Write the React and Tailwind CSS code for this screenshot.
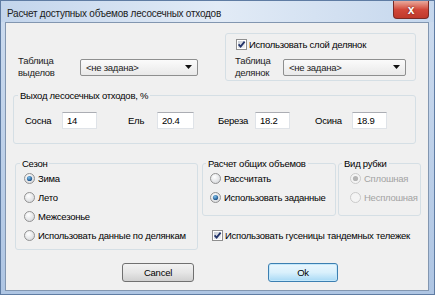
import React from 'react';

function CheckBox({ checked }) {
  return (
    <svg width="11" height="11" viewBox="0 0 11 11" className="shrink-0">
      <defs>
        <linearGradient id="cbfill" x1="0" y1="0" x2="1" y2="1">
          <stop offset="0" stopColor="#c9ced6" />
          <stop offset="1" stopColor="#f4f5f6" />
        </linearGradient>
      </defs>
      <rect x="0.5" y="0.5" width="10" height="10" fill="#fff" stroke="#8f8f8f" />
      <rect x="2" y="2" width="7" height="7" fill="url(#cbfill)" />
      {checked && <path d="M2.6 5.4 L4.6 7.6 L8.6 2.6" fill="none" stroke="#23346a" strokeWidth="1.8" />}
    </svg>
  );
}

function Radio({ checked, disabled }) {
  return (
    <svg width="11" height="11" viewBox="0 0 11 11" className="shrink-0">
      <defs>
        <radialGradient id="rfill" cx="0.4" cy="0.35" r="0.7">
          <stop offset="0" stopColor="#ffffff" />
          <stop offset="1" stopColor="#d6d8db" />
        </radialGradient>
        <radialGradient id="rdot" cx="0.4" cy="0.35" r="0.7">
          <stop offset="0" stopColor="#7fc2ee" />
          <stop offset="1" stopColor="#12467e" />
        </radialGradient>
      </defs>
      <circle cx="5.5" cy="5.5" r="5" fill={disabled ? '#f4f4f4' : 'url(#rfill)'} stroke={disabled ? '#c9c9c9' : '#929292'} />
      {checked && <circle cx="5.5" cy="5.5" r="2.6" fill={disabled ? '#b4b4b4' : 'url(#rdot)'} />}
    </svg>
  );
}

function Combo({ w }) {
  return (
    <div className={`${w} h-[17px] flex items-center rounded-[2px] border border-[#8e8f8f] bg-gradient-to-b from-[#fbfbfb] to-[#e9e9e9] pl-[5px] pr-[5px] text-[#222]`}>
      <span>&lt;не задана&gt;</span>
      <svg width="7" height="4" viewBox="0 0 7 4" className="ml-auto">
        <path d="M0 0h7L3.5 4z" fill="#111" />
      </svg>
    </div>
  );
}

function Field({ value, w }) {
  return (
    <div className={`${w} h-[17px] flex items-center bg-white border border-[#dfe3e8] border-t-[#abadb3] pl-[4px] text-black`}>
      {value}
    </div>
  );
}

function RadioRow({ label, checked, disabled }) {
  return (
    <div className={`h-[13px] flex items-center gap-[3px] whitespace-nowrap ${disabled ? 'text-[#a3a3a3]' : 'text-black'}`}>
      <Radio checked={checked} disabled={disabled} />
      <span>{label}</span>
    </div>
  );
}

export default function App() {
  return (
    <div className="w-[435px] h-[295px] flex flex-col border border-[#5f7ca3] bg-gradient-to-b from-[#cddcef] to-[#aec5e3] font-['Liberation_Sans',Arial,sans-serif] text-[10px] tracking-[-0.25px] leading-[13px]">
      {/* title bar */}
      <div className="h-[21px] flex items-start bg-gradient-to-r from-[#c3d5ec] via-[#e2ebf6] to-[#c5d7ed]">
        <span className="pl-[6px] pt-[6px] text-[#1b1b1b]">Расчет доступных объемов лесосечных отходов</span>
        <div className="ml-auto mr-[5px] w-[36px] h-[18px] flex items-center justify-center rounded-b-[4px] border border-t-0 border-[#7a2a25] bg-gradient-to-b from-[#e8a89c] via-[#d2483a] to-[#c0392b]">
          <span className="text-white font-bold text-[12px] leading-[12px] [text-shadow:0_0_2px_#5a1a14]">x</span>
        </div>
      </div>

      {/* client area */}
      <div className="flex-1 mx-[4px] mr-[5px] mb-[3px] border border-[#8296b0] bg-[#f0f0f0] flex flex-col text-black text-[9.5px]">
        {/* row 1 */}
        <div className="mt-[10px] flex h-[48px]">
          <div className="w-[219px] pl-[12px] pt-[22px]">
            <div className="flex items-center">
              <div className="w-[62px] leading-[12px] text-[#222]">Таблица<br />выделов</div>
              <Combo w="w-[118px]" />
            </div>
          </div>
          <div className="w-[191px] h-[48px] rounded-[3px] border border-[#d5dfe5] flex flex-col pl-[10px] pt-[4px]">
            <div className="h-[13px] flex items-center gap-[2px]">
              <CheckBox checked />
              <span>Использовать слой делянок</span>
            </div>
            <div className="mt-[4px] flex items-center">
              <div className="w-[48px] -ml-[1px] leading-[12px] text-[#222]">Таблица<br />делянок</div>
              <Combo w="w-[123px]" />
            </div>
          </div>
        </div>

        {/* row 2 */}
        <fieldset className="mt-[8px] ml-[7px] w-[403px] h-[55px] rounded-[3px] border border-[#d5dfe5] px-[4px] pt-[10px]">
          <legend className="px-[2px] leading-[13px]">Выход лесосечных отходов, %</legend>
          <div className="flex items-center">
            <span className="ml-[7px] w-[37px]">Сосна</span>
            <Field value="14" w="w-[35px]" />
            <span className="ml-[31px] w-[29px]">Ель</span>
            <Field value="20.4" w="w-[37px]" />
            <span className="ml-[24px] w-[37px]">Береза</span>
            <Field value="18.2" w="w-[35px]" />
            <span className="ml-[25px] w-[37px]">Осина</span>
            <Field value="18.9" w="w-[35px]" />
          </div>
        </fieldset>

        {/* row 3 */}
        <div className="mt-[13px] flex">
          <fieldset className="ml-[9px] w-[183px] h-[93px] rounded-[3px] border border-[#d5dfe5] pl-[4px] pt-[2px]">
            <legend className="px-[2px] leading-[13px]">Сезон</legend>
            <div className="ml-[4px] flex flex-col gap-[6px]">
              <RadioRow label="Зима" checked />
              <RadioRow label="Лето" />
              <RadioRow label="Межсезонье" />
              <RadioRow label="Использовать данные по делянкам" />
            </div>
          </fieldset>

          <div className="flex flex-col">
            <div className="flex">
              <fieldset className="ml-[4px] w-[134px] h-[59px] rounded-[3px] border border-[#d5dfe5] pl-[3px] pt-[2px]">
                <legend className="px-[2px] leading-[13px]">Расчет общих объемов</legend>
                <div className="ml-[4px] flex flex-col gap-[6px]">
                  <RadioRow label="Рассчитать" />
                  <RadioRow label="Использовать заданные" checked />
                </div>
              </fieldset>
              <fieldset className="ml-[2px] w-[83px] h-[59px] rounded-[3px] border border-[#d5dfe5] pl-[3px] pt-[2px]">
                <legend className="px-[2px] leading-[13px]">Вид рубки</legend>
                <div className="ml-[8px] flex flex-col gap-[6px]">
                  <RadioRow label="Сплошная" checked disabled />
                  <RadioRow label="Несплошная" disabled />
                </div>
              </fieldset>
            </div>
            <div className="mt-[14px] ml-[14px] h-[11px] flex items-center gap-[2px] whitespace-nowrap">
              <CheckBox checked />
              <span>Использовать гусеницы тандемных тележек</span>
            </div>
          </div>
        </div>

        {/* buttons */}
        <div className="mt-[13px] flex">
          <button className="ml-[116px] w-[72px] h-[19px] rounded-[3px] border border-[#707070] bg-gradient-to-b from-[#f2f2f2] via-[#e6e6e6] to-[#d0d0d0] text-black leading-[13px]">
            Cancel
          </button>
          <button className="ml-[74px] w-[70px] h-[19px] rounded-[3px] border border-[#3c7fb1] bg-gradient-to-b from-[#eaf6fd] via-[#d9f0fc] to-[#a7d9f5] text-black leading-[13px] shadow-[inset_0_0_0_1px_#c4e8fb]">
            Ok
          </button>
        </div>
      </div>
    </div>
  );
}
